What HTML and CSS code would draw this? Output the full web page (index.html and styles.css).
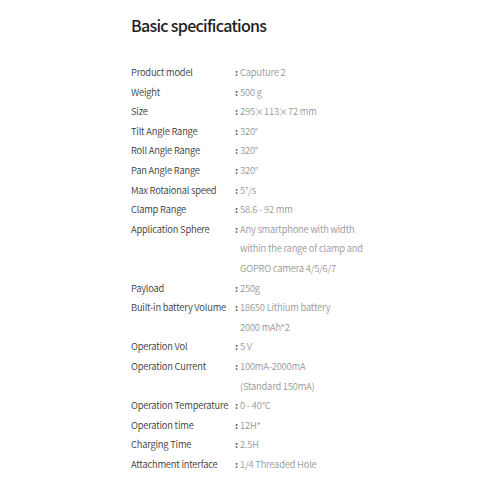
FILE: index.html
```html
<!DOCTYPE html>
<html>
<head>
<meta charset="utf-8">
<link rel="stylesheet" href="styles.css">
</head>
<body>
<div class="page">
  <h1 class="title">Basic specifications</h1>
  <div class="specs">
    <div class="label">Product model</div><div class="colon">:</div><div class="value">Caputure 2</div>
    <div class="label">Weight</div><div class="colon">:</div><div class="value">500 g</div>
    <div class="label">Size</div><div class="colon">:</div><div class="value">295×113×72 mm</div>
    <div class="label">Tilt Angle Range</div><div class="colon">:</div><div class="value">320°</div>
    <div class="label">Roll Angle Range</div><div class="colon">:</div><div class="value">320°</div>
    <div class="label">Pan Angle Range</div><div class="colon">:</div><div class="value">320°</div>
    <div class="label">Max Rotaional speed</div><div class="colon">:</div><div class="value">5°/s</div>
    <div class="label">Clamp Range</div><div class="colon">:</div><div class="value">58.6 - 92 mm</div>
    <div class="label">Application Sphere</div><div class="colon">:</div><div class="value">Any smartphone with width within the range of clamp and GOPRO camera 4/5/6/7</div>
    <div class="label">Payload</div><div class="colon">:</div><div class="value">250g</div>
    <div class="label">Built-in battery Volume</div><div class="colon">:</div><div class="value">18650 Lithium battery<br>2000 mAh*2</div>
    <div class="label">Operation Vol</div><div class="colon">:</div><div class="value">5 V</div>
    <div class="label">Operation Current</div><div class="colon">:</div><div class="value">100mA-2000mA<br>(Standard 150mA)</div>
    <div class="label">Operation Temperature</div><div class="colon">:</div><div class="value">0 - 40°C</div>
    <div class="label">Operation time</div><div class="colon">:</div><div class="value">12H*</div>
    <div class="label">Charging Time</div><div class="colon">:</div><div class="value">2.5H</div>
    <div class="label">Attachment interface</div><div class="colon">:</div><div class="value">1/4 Threaded Hole</div>
  </div>
</div>
</body>
</html>
```
FILE: styles.css
```css
html, body {
  margin: 0;
  padding: 0;
  background: #fff;
}
.page {
  padding: 13px 0 0 131px;
  font-family: "Noto Sans CJK SC", "Noto Sans", sans-serif;
}
.title {
  margin: 0 0 26px 0;
  font-size: 16px;
  line-height: 24px;
  font-weight: 500;
  letter-spacing: -0.7px;
  color: #222;
}
.specs {
  display: grid;
  grid-template-columns: 104px 5px 126px;
  font-size: 9.4px;
  line-height: 19.6px;
  letter-spacing: -0.2px;
}
.label {
  color: #3c3c3c;
  font-weight: 350;
}
.colon {
  color: #555;
  font-weight: 700;
}
.value {
  color: #999;
  font-weight: 350;
}
```
